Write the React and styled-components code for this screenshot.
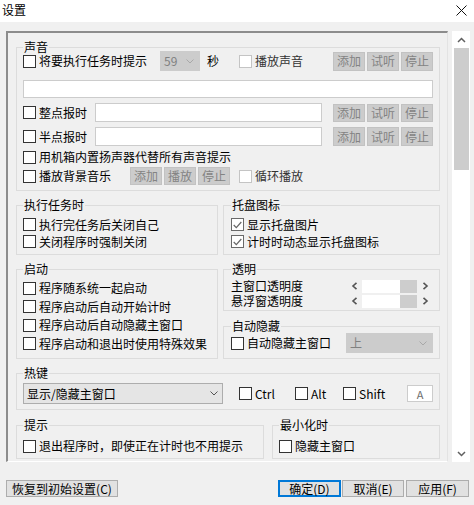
import styled, { createGlobalStyle } from "styled-components";

const GlobalStyle = createGlobalStyle`
  * { box-sizing: border-box; }
  html, body { margin: 0; padding: 0; background: #f0f0f0; }
  body {
    font-family: "Noto Sans CJK SC", "Microsoft YaHei", sans-serif;
    font-size: 12px;
    color: #000;
  }
`;

const Window = styled.div`
  width: 474px;
  height: 505px;
  background: #f0f0f0;
  display: flex;
  flex-direction: column;
  overflow: hidden;
`;

const TitleBar = styled.div`
  height: 22px;
  flex-shrink: 0;
  background: #fff;
  display: flex;
  align-items: flex-start;
  justify-content: space-between;
  padding: 3px 7px 0 2px;
`;

const Title = styled.span`
  line-height: 13px;
`;

const CloseBtn = styled.span`
  margin-top: 2px;
  display: flex;
`;

const Body = styled.div`
  display: flex;
  margin: 9px 0 0 6px;
  height: 431px;
  flex-shrink: 0;
`;

const ScrollView = styled.div`
  width: 442px;
  height: 100%;
  border-style: solid;
  border-width: 2px 1px 1px 2px;
  border-color: #8c8c8c #e3e3e3 #ffffff #8c8c8c;
  padding: 8px 0 0 8px;
  overflow: hidden;
`;

const ScrollBar = styled.div`
  width: 18px;
  margin-left: 4px;
  height: 100%;
  background: #fff;
  display: flex;
  flex-direction: column;
  align-items: center;
`;

const ScrollArrow = styled.div`
  height: 17px;
  width: 100%;
  display: flex;
  align-items: center;
  justify-content: center;
  flex-shrink: 0;
`;

const ScrollThumb = styled.div`
  width: 15px;
  height: 122px;
  background: #cdcdcd;
  flex-shrink: 0;
`;

const ScrollTrack = styled.div`
  flex: 1;
`;

const Group = styled.fieldset`
  margin: 0;
  min-width: 0;
  width: ${(p) => p.$w}px;
  height: ${(p) => p.$h}px;
  border: 1px solid #dcdcdc;
  padding: 0 6px 0 ${(p) => p.$pl ?? 6}px;
  flex-shrink: 0;
`;

const Legend = styled.legend`
  padding: 0 1px;
  line-height: 12px;
  height: 12px;
`;

const Columns = styled.div`
  display: flex;
  gap: ${(p) => p.$gap ?? 5}px;
  margin-top: ${(p) => p.$mt ?? 8}px;
`;

const Stack = styled.div`
  display: flex;
  flex-direction: column;
  gap: 9px;
`;

const Row = styled.div`
  display: flex;
  align-items: center;
  height: ${(p) => p.$h}px;
  margin-top: ${(p) => p.$mt ?? 0}px;
  white-space: nowrap;
  line-height: 14px;
`;

const CheckLabel = styled.label`
  display: flex;
  align-items: center;
  gap: 3px;
  flex-shrink: 0;
  white-space: nowrap;
  line-height: 14px;
  width: ${(p) => (p.$w ? `${p.$w}px` : "auto")};
  margin-left: ${(p) => p.$ml ?? 0}px;
  color: ${(p) => (p.$disabled ? "#333" : "#000")};
`;

const CheckBox = styled.span`
  width: 13px;
  height: 13px;
  flex-shrink: 0;
  display: flex;
  align-items: center;
  justify-content: center;
  background: #fff;
  border: 1px solid
    ${(p) => (p.$disabled ? "#c4c4c4" : p.$checked ? "#6a6a6a" : "#333")};
`;

const Btn = styled.button`
  font: inherit;
  font-size: 12px;
  line-height: 1;
  padding: 0;
  flex-shrink: 0;
  width: ${(p) => p.$w}px;
  height: ${(p) => p.$h ?? 19}px;
  background: ${(p) => (p.disabled ? "#cccccc" : "#e1e1e1")};
  color: ${(p) => (p.disabled ? "#838383" : "#000")};
  border: ${(p) =>
    p.$primary
      ? "2px solid #0078d7"
      : `1px solid ${p.disabled ? "#c2c2c2" : "#adadad"}`};
  margin-left: ${(p) => (p.$ml === "auto" ? "auto" : `${p.$ml ?? 0}px`)};
`;

const BtnGroup = styled.div`
  display: flex;
  gap: 2px;
  flex-shrink: 0;
  margin-left: ${(p) => (p.$ml === "auto" ? "auto" : `${p.$ml ?? 0}px`)};
`;

const Select = styled.div`
  display: flex;
  align-items: center;
  justify-content: space-between;
  flex-shrink: 0;
  width: ${(p) => p.$w}px;
  height: ${(p) => p.$h}px;
  padding: 0 ${(p) => p.$pr ?? 5}px 0 3px;
  background: ${(p) => (p.$disabled ? "#cccccc" : "#e5e5e5")};
  border: 1px solid ${(p) => (p.$disabled ? "#cccccc" : "#adadad")};
  color: ${(p) => (p.$disabled ? "#808080" : "#000")};
  margin-left: ${(p) => (p.$ml === "auto" ? "auto" : `${p.$ml ?? 0}px`)};
`;

const TextInput = styled.input`
  flex-shrink: 0;
  width: ${(p) => (p.$w ? `${p.$w}px` : "100%")};
  height: ${(p) => p.$h}px;
  margin: 0;
  padding: 0;
  border: 1px solid #cccccc;
  background: #fff;
  outline: none;
`;

const Unit = styled.span`
  margin-left: 7px;
`;

const Slider = styled.div`
  display: flex;
  align-items: center;
  margin-left: auto;
  height: 13px;
`;

const SlideArrow = styled.span`
  width: 16px;
  display: flex;
  align-items: center;
  justify-content: center;
`;

const SlideTrack = styled.div`
  width: 55px;
  height: 13px;
  background: #fff;
  display: flex;
  justify-content: flex-end;
`;

const SlideThumb = styled.div`
  width: 17px;
  height: 100%;
  background: #cdcdcd;
`;

const KeyBox = styled.div`
  width: 26px;
  height: 17px;
  margin-left: auto;
  background: #fff;
  border: 1px solid #cccccc;
  display: flex;
  align-items: center;
  justify-content: center;
  color: #6d6d6d;
  font-size: 11px;
`;

const Footer = styled.div`
  display: flex;
  align-items: center;
  height: 17px;
  margin-top: 18px;
  padding: 0 5px 0 6px;
`;

const Chevron = ({ color = "#8a8a8a" }) => (
  <svg width="8" height="5" viewBox="0 0 8 5">
    <path d="M0.5 0.5 L4 4 L7.5 0.5" fill="none" stroke={color} strokeWidth="1" />
  </svg>
);

const Check = ({ label, checked, disabled, w, ml }) => (
  <CheckLabel $w={w} $ml={ml} $disabled={disabled}>
    <CheckBox $checked={checked} $disabled={disabled}>
      {checked && (
        <svg width="9" height="8" viewBox="0 0 9 8">
          <path d="M0.7 4 L3.3 6.6 L8.3 1" fill="none" stroke="#666" strokeWidth="1.2" />
        </svg>
      )}
    </CheckBox>
    {label}
  </CheckLabel>
);

const SoundButtons = ({ labels, h = 19, ml = "auto" }) => (
  <BtnGroup $ml={ml}>
    {labels.map((l) => (
      <Btn key={l} $w={32} $h={h} disabled>
        {l}
      </Btn>
    ))}
  </BtnGroup>
);

const ArrowIcon = ({ dir }) => (
  <svg width="7" height="8" viewBox="0 0 7 8">
    <path
      d={dir === "left" ? "M5.5 0.8 L2 4 L5.5 7.2" : "M1.5 0.8 L5 4 L1.5 7.2"}
      fill="none"
      stroke="#555"
      strokeWidth="1.6"
    />
  </svg>
);

const Opacity = () => (
  <Slider>
    <SlideArrow>
      <ArrowIcon dir="left" />
    </SlideArrow>
    <SlideTrack>
      <SlideThumb />
    </SlideTrack>
    <SlideArrow>
      <ArrowIcon dir="right" />
    </SlideArrow>
  </Slider>
);

const preview = ["添加", "试听", "停止"];

export default function App() {
  return (
    <>
      <GlobalStyle />
      <Window>
        <TitleBar>
          <Title>设置</Title>
          <CloseBtn>
            <svg width="11" height="11" viewBox="0 0 11 11">
              <path d="M0.5 0.5 L10.5 10.5 M10.5 0.5 L0.5 10.5" stroke="#111" strokeWidth="1" />
            </svg>
          </CloseBtn>
        </TitleBar>

        <Body>
          <ScrollView>
            <Group $w={424} $h={150}>
              <Legend>声音</Legend>
              <Row $h={20} $mt={-2}>
                <Check label="将要执行任务时提示" w={137} />
                <Select $w={40} $h={20} $disabled>
                  59
                  <Chevron color="#a8a8a8" />
                </Select>
                <Unit>秒</Unit>
                <Check label="播放声音" disabled ml={20} />
                <SoundButtons labels={preview} />
              </Row>
              <Row $h={18} $mt={9}>
                <TextInput $h={18} />
              </Row>
              <Row $h={19} $mt={5}>
                <Check label="整点报时" w={72} />
                <TextInput $w={227} $h={19} />
                <SoundButtons labels={preview} h={18} />
              </Row>
              <Row $h={19} $mt={5}>
                <Check label="半点报时" w={72} />
                <TextInput $w={227} $h={19} />
                <SoundButtons labels={preview} />
              </Row>
              <Row $h={16} $mt={3}>
                <Check label="用机箱内置扬声器代替所有声音提示" />
              </Row>
              <Row $h={18} $mt={2}>
                <Check label="播放背景音乐" w={107} />
                <SoundButtons labels={["添加", "播放", "停止"]} h={18} ml={0} />
                <Check label="循环播放" disabled ml={9} />
              </Row>
            </Group>

            <Columns>
              <Group $w={202} $h={56}>
                <Legend>执行任务时</Legend>
                <Row $h={17} $mt={5}>
                  <Check label="执行完任务后关闭自己" />
                </Row>
                <Row $h={17}>
                  <Check label="关闭程序时强制关闭" />
                </Row>
              </Group>
              <Group $w={217} $h={56} $pl={7}>
                <Legend>托盘图标</Legend>
                <Row $h={17} $mt={5}>
                  <Check label="显示托盘图片" checked />
                </Row>
                <Row $h={17}>
                  <Check label="计时时动态显示托盘图标" checked />
                </Row>
              </Group>
            </Columns>

            <Columns>
              <Group $w={202} $h={96}>
                <Legend>启动</Legend>
                <Row $h={18.5} $mt={4}>
                  <Check label="程序随系统一起启动" />
                </Row>
                <Row $h={18.5}>
                  <Check label="程序启动后自动开始计时" />
                </Row>
                <Row $h={18.5}>
                  <Check label="程序启动后自动隐藏主窗口" />
                </Row>
                <Row $h={18.5}>
                  <Check label="程序启动和退出时使用特殊效果" />
                </Row>
              </Group>
              <Stack>
                <Group $w={217} $h={48} $pl={7}>
                  <Legend>透明</Legend>
                  <Row $h={15} $mt={3.5}>
                    主窗口透明度
                    <Opacity />
                  </Row>
                  <Row $h={15}>
                    悬浮窗透明度
                    <Opacity />
                  </Row>
                </Group>
                <Group $w={217} $h={39} $pl={7}>
                  <Legend>自动隐藏</Legend>
                  <Row $h={20} $mt={1}>
                    <Check label="自动隐藏主窗口" />
                    <Select $w={87} $h={20} $ml="auto" $disabled>
                      上
                      <Chevron color="#a8a8a8" />
                    </Select>
                  </Row>
                </Group>
              </Stack>
            </Columns>

            <Columns>
              <Group $w={424} $h={43}>
                <Legend>热键</Legend>
                <Row $h={21} $mt={4}>
                  <Select $w={200} $h={21} $pr={4}>
                    显示/隐藏主窗口
                    <Chevron color="#555" />
                  </Select>
                  <Check label="Ctrl" w={56} ml={16} />
                  <Check label="Alt" w={48} />
                  <Check label="Shift" />
                  <KeyBox>A</KeyBox>
                </Row>
              </Group>
            </Columns>

            <Columns $gap={8} $mt={9}>
              <Group $w={248} $h={40}>
                <Legend>提示</Legend>
                <Row $h={16} $mt={7}>
                  <Check label="退出程序时，即使正在计时也不用提示" />
                </Row>
              </Group>
              <Group $w={168} $h={40}>
                <Legend>最小化时</Legend>
                <Row $h={16} $mt={7}>
                  <Check label="隐藏主窗口" />
                </Row>
              </Group>
            </Columns>
          </ScrollView>

          <ScrollBar>
            <ScrollArrow>
              <svg width="9" height="6" viewBox="0 0 9 6">
                <path d="M1 5 L4.5 1.5 L8 5" fill="none" stroke="#606060" strokeWidth="1.5" />
              </svg>
            </ScrollArrow>
            <ScrollThumb />
            <ScrollTrack />
            <ScrollArrow>
              <svg width="9" height="6" viewBox="0 0 9 6">
                <path d="M1 1 L4.5 4.5 L8 1" fill="none" stroke="#606060" strokeWidth="1.5" />
              </svg>
            </ScrollArrow>
          </ScrollBar>
        </Body>

        <Footer>
          <Btn $w={112} $h={17}>恢复到初始设置(C)</Btn>
          <Btn $w={63} $h={17} $ml="auto" $primary>
            确定(D)
          </Btn>
          <Btn $w={62} $h={17} $ml={1}>
            取消(E)
          </Btn>
          <Btn $w={63} $h={17} $ml={2}>
            应用(F)
          </Btn>
        </Footer>
      </Window>
    </>
  );
}
